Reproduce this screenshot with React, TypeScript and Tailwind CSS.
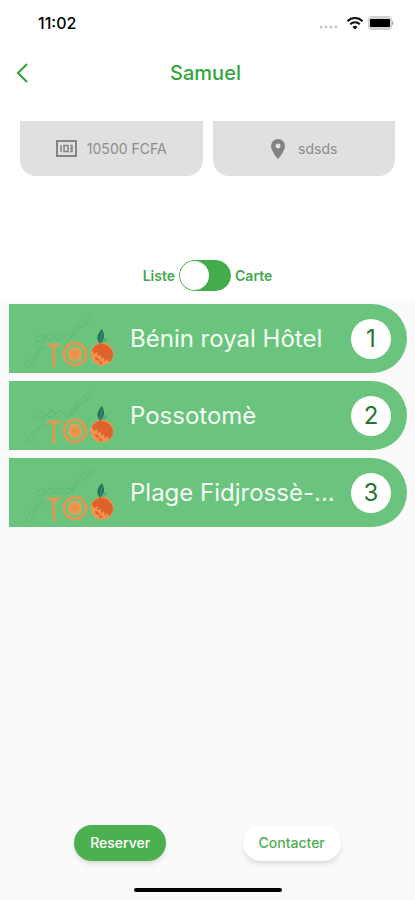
import { useState } from "react";

const places = ["Bénin royal Hôtel", "Possotomè", "Plage Fidjrossè-..."];

function GoodTooLogo() {
  return (
    <svg viewBox="0 0 100 68" className="h-[68px] w-[100px] shrink-0" fill="none" aria-hidden="true">
      <g stroke="#5fb377" strokeWidth="0.800" strokeLinecap="round" strokeLinejoin="round">
        <path d="M69 8 60 17c-3 2-3 4-4 7l-8 11M71 10l-7 8M73 12l-9 8c-3 1-5 2-7 5l-6 8" />
        <path d="M24 31c-7-2-12 3-9 5 3 2 8-1 10-5l-6 13c-4 4-8 7-12 12-3 4-3 8 0 7 4-2 5-8 8-12 3-5 8-8 14-10" />
        <path d="M32 29c-5-1-7 5-4 6 4 1 8-5 4-6ZM40 29c-5-1-7 5-4 6 4 1 8-5 4-6ZM49 29c-5-1-7 5-4 6 2 0 4-2 5-5l5-9" />
      </g>
      <g stroke="#de9a52" strokeWidth="3">
        <path d="M26 40h14M33 39v23" />
        <circle cx="54" cy="49" r="11" />
      </g>
      <circle cx="54" cy="49" r="7.500" fill="#cfa85f" />
      <circle cx="54" cy="49" r="5.500" fill="#e59a50" />
      <circle cx="54" cy="49" r="3" fill="#f08d45" />
      <circle cx="81" cy="49" r="11.500" fill="#f19350" />
      <path d="M71 45c4-8 13-8 18-2 5 5 3 12-1 14l-2-3-2 3-1-5-3 2 0-4-4 1 1-4-4 2Z" fill="#df622b" />
      <path d="M75 53l2 2M79 57l1 1M88 47l2-1" stroke="#df622b" strokeWidth="2" strokeLinecap="round" />
      <path d="M79 39c-5-6-2-11 2-15 3 6 3 10-2 15Z" fill="#28745b" />
      <path d="m79 38 2-10" stroke="#3f8f76" strokeWidth="1" />
      <path d="M81 38c0-4 3-5 5-5 0 3-2 5-5 5Z" fill="#5dac78" />
    </svg>
  );
}

function StatusBar() {
  return (
    <div className="flex h-[46px] items-center justify-between pl-[38px] pr-5">
      <span className="text-base font-medium text-black">11:02</span>
      <div className="flex items-center gap-1">
        <svg viewBox="0 0 20 12" className="h-3 w-5" fill="#bdbdbd" aria-hidden="true">
          <circle cx="3" cy="10" r="1.300" /><circle cx="8" cy="10" r="1.300" /><circle cx="13" cy="10" r="1.300" /><circle cx="18" cy="10" r="1.300" />
        </svg>
        <svg viewBox="0 0 18 14" className="ml-1 h-[14px] w-[18px]" fill="none" stroke="#111" strokeWidth="2" aria-hidden="true">
          <path d="M1.500 5.200a10.500 10.500 0 0 1 15 0M4.300 8.200a6.600 6.600 0 0 1 9.400 0" />
          <path d="M9 13.500 6.500 11a3.500 3.500 0 0 1 5 0Z" fill="#111" stroke="none" />
        </svg>
        <svg viewBox="0 0 27 14" className="h-[14px] w-[27px]" aria-hidden="true">
          <rect width="24" height="14" rx="4" fill="#d2d2d2" />
          <rect x="2" y="3" width="20" height="8" rx="1" fill="#000" />
          <path d="M24 4.500q3 2.500 0 5Z" fill="#aaa" />
        </svg>
      </div>
    </div>
  );
}

export default function App() {
  const [carte, setCarte] = useState(false);
  return (
    <div className="flex min-h-screen flex-col bg-[#fafafa] font-['Inter','Liberation_Sans',sans-serif]">
      <div className="bg-white pb-2">
        <StatusBar />
        <header className="grid h-[54px] grid-cols-[40px_1fr_44px] items-center">
          <button type="button" aria-label="Retour" className="flex h-11 items-center pl-4">
            <svg viewBox="0 0 12 20" className="h-5 w-3" fill="none" stroke="#2ca336" strokeWidth="2" aria-hidden="true">
              <path d="M11 1 2 10l9 9" />
            </svg>
          </button>
          <h1 className="text-center text-xl font-medium text-[#34a53c]">Samuel</h1>
        </header>
        <section className="mt-[21px] grid grid-cols-2 gap-[10px] px-5 text-sm text-[#8c8c8c]">
          <div className="flex h-[55px] items-center justify-center gap-[10px] rounded-b-2xl bg-[#e0e0e0]">
            <svg viewBox="0 0 21 17" className="h-[17px] w-[21px]" fill="none" stroke="#858585" aria-hidden="true">
              <path d="M1 1h19v15H1Z" strokeWidth="2" />
              <path d="M5 5v7M8 5.500h4v6H8ZM14 5.500h2v6h-2M14 8.500h2" strokeWidth="1.500" />
            </svg>
            <span>10500 FCFA</span>
          </div>
          <div className="flex h-[55px] items-center justify-center gap-3 rounded-b-2xl bg-[#e0e0e0]">
            <svg viewBox="0 0 16 20" className="h-5 w-4" fill="#828282" aria-hidden="true">
              <path fillRule="evenodd" d="M8 0a7 7 0 0 0-7 7c0 5 7 13 7 13s7-8 7-13a7 7 0 0 0-7-7Zm0 4.500a2.500 2.500 0 1 1 0 5 2.500 2.500 0 0 1 0-5Z" />
            </svg>
            <span>sdsds</span>
          </div>
        </section>
        <label className="mt-[83px] mb-px flex h-[33px] items-center justify-center gap-1 text-sm font-semibold text-[#43a94b]">
          <span>Liste</span>
          <input type="checkbox" role="switch" aria-label="Afficher la carte" checked={carte} onChange={(e) => setCarte(e.target.checked)} className="peer sr-only" />
          <span className="flex h-[31px] w-[52px] rounded-full border border-[#43ad4b] bg-[#43ad4b] peer-checked:justify-end">
            <span className="h-[29px] w-[29px] rounded-full bg-white" />
          </span>
          <span>Carte</span>
        </label>
      </div>
      <ol className="mt-[3px] flex flex-col gap-2 pl-[9px] pr-2">
        {places.map((name, i) => (
          <li key={name} className="flex h-[69px] items-center rounded-r-[35px] bg-[#6bc47d] pl-3 pr-4">
            <GoodTooLogo />
            <span className="ml-[9px] flex-1 whitespace-nowrap text-2xl text-[#f3fff4]">{name}</span>
            <span className="flex size-10 shrink-0 items-center justify-center rounded-full bg-white text-2xl text-[#24752c]">{i + 1}</span>
          </li>
        ))}
      </ol>
      <footer className="mt-auto">
        <div className="flex justify-around px-[36px] text-sm font-medium">
          <button type="button" className="h-9 rounded-full bg-[#4caf50] px-4 text-white shadow-md">Reserver</button>
          <button type="button" className="h-9 rounded-full bg-white px-4 text-[#4caf50] shadow-md">Contacter</button>
        </div>
        <div className="mx-auto mt-[27px] mb-2 h-1 w-[148px] rounded-full bg-black" />
      </footer>
    </div>
  );
}
